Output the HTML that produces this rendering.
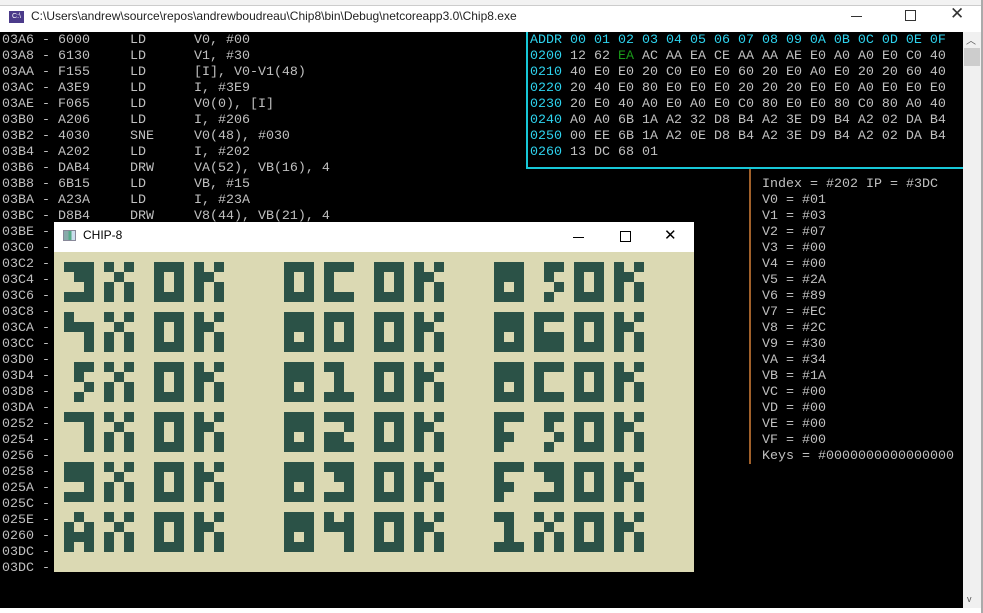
<!DOCTYPE html>
<html><head><meta charset="utf-8"><style>
*{margin:0;padding:0;box-sizing:border-box}
body{width:983px;height:613px;overflow:hidden;background:#fff;position:relative;font-family:"Liberation Sans",sans-serif}
.abs{position:absolute}
.mono{font-family:"Liberation Mono","DejaVu Sans Mono",monospace;font-size:13.33px;line-height:16px;white-space:pre;color:#c0c0c0}
.cy{color:#2ed3ee}
.gr{color:#1a9a1a}
</style></head><body>
<div class="abs" style="left:0;top:0;width:983px;height:6px;background:#f2f2f2"></div>
<div class="abs" style="left:0;top:5px;width:981px;height:27px;background:#fff;border-top:1px solid #ccc"></div>
<div class="abs" style="left:9px;top:11px;width:15px;height:12px;background:#4b3b8a;color:#fff;font-size:7px;line-height:12px;text-align:center">C:\</div>
<div class="abs" style="left:31px;top:9px;font-size:12px;color:#222;white-space:pre">C:\Users\andrew\source\repos\andrewboudreau\Chip8\bin\Debug\netcoreapp3.0\Chip8.exe</div>
<div class="abs" style="left:851px;top:16px;width:11px;height:1px;background:#333"></div>
<div class="abs" style="left:905px;top:10px;width:11px;height:11px;border:1px solid #333"></div>
<div class="abs" style="left:950px;top:4px;font-size:17px;color:#333">✕</div>
<div class="abs" style="left:0;top:32px;width:963px;height:576px;background:#000"></div>
<div class="abs" style="left:963px;top:32px;width:18px;height:576px;background:#f0f0f0"></div>
<div class="abs" style="left:964px;top:48px;width:16px;height:18px;background:#cdcdcd"></div>
<div class="abs" style="left:966px;top:32px;font-size:10px;color:#555">︿</div>
<div class="abs" style="left:967px;top:594px;font-size:9px;color:#555">v</div>
<div class="abs" style="left:981px;top:0;width:2px;height:613px;background:#aaa"></div>
<div class="abs" style="left:0;top:608px;width:981px;height:5px;background:#fff"></div>

<div class="abs mono" style="left:2px;top:33px">03A6 - 6000     LD      V0, #00
03A8 - 6130     LD      V1, #30
03AA - F155     LD      [I], V0-V1(48)
03AC - A3E9     LD      I, #3E9
03AE - F065     LD      V0(0), [I]
03B0 - A206     LD      I, #206
03B2 - 4030     SNE     V0(48), #030
03B4 - A202     LD      I, #202
03B6 - DAB4     DRW     VA(52), VB(16), 4
03B8 - 6B15     LD      VB, #15
03BA - A23A     LD      I, #23A
03BC - D8B4     DRW     V8(44), VB(21), 4
03BE -
03C0 -
03C2 -
03C4 -
03C6 -
03C8 -
03CA -
03CC -
03D0 -
03D4 -
03D8 -
03DA -
0252 -
0254 -
0256 -
0258 -
025A -
025C -
025E -
0260 -
03DC -
03DC -</div>

<div class="abs" style="left:526px;top:32px;width:437px;height:137px;border-left:2px solid #17c8d8;border-bottom:2px solid #17c8d8"></div>
<div class="abs mono" style="left:530px;top:33px"><span class="cy">ADDR 00 01 02 03 04 05 06 07 08 09 0A 0B 0C 0D 0E 0F</span>
<span class="cy">0200</span> 12 62 <span class="gr">EA</span> AC AA EA CE AA AA AE E0 A0 A0 E0 C0 40
<span class="cy">0210</span> 40 E0 E0 20 C0 E0 E0 60 20 E0 A0 E0 20 20 60 40
<span class="cy">0220</span> 20 40 E0 80 E0 E0 E0 20 20 20 E0 E0 A0 E0 E0 E0
<span class="cy">0230</span> 20 E0 40 A0 E0 A0 E0 C0 80 E0 E0 80 C0 80 A0 40
<span class="cy">0240</span> A0 A0 6B 1A A2 32 D8 B4 A2 3E D9 B4 A2 02 DA B4
<span class="cy">0250</span> 00 EE 6B 1A A2 0E D8 B4 A2 3E D9 B4 A2 02 DA B4
<span class="cy">0260</span> 13 DC 68 01</div>

<div class="abs" style="left:749px;top:169px;width:2px;height:295px;background:#a0602a"></div>
<div class="abs mono" style="left:762px;top:177px">Index = #202 IP = #3DC
V0 = #01
V1 = #03
V2 = #07
V3 = #00
V4 = #00
V5 = #2A
V6 = #89
V7 = #EC
V8 = #2C
V9 = #30
VA = #34
VB = #1A
VC = #00
VD = #00
VE = #00
VF = #00
Keys = #0000000000000000</div>

<div class="abs" style="left:54px;top:222px;width:640px;height:30px;background:#fff"></div>
<div class="abs" style="left:63px;top:230px;width:13px;height:11px;background:linear-gradient(90deg,#8aa 0 40%,#5a8 40% 70%,#cde 70%);border:1px solid #889"></div>
<div class="abs" style="left:83px;top:228px;font-size:12px;color:#000">CHIP-8</div>
<div class="abs" style="left:573px;top:237px;width:11px;height:1px;background:#000"></div>
<div class="abs" style="left:620px;top:231px;width:11px;height:11px;border:1px solid #000"></div>
<div class="abs" style="left:664px;top:226px;font-size:15px;color:#000">✕</div>
<svg class="abs" style="left:54px;top:252px" width="640" height="320" viewBox="0 0 64 32" shape-rendering="crispEdges">
<defs>
<g id="g3"><rect x="0" y="0" width="3" height="1"/><rect x="1" y="1" width="2" height="1"/><rect x="2" y="2" width="1" height="1"/><rect x="0" y="3" width="3" height="1"/></g>
<g id="gX"><rect x="0" y="0" width="1" height="1"/><rect x="2" y="0" width="1" height="1"/><rect x="1" y="1" width="1" height="1"/><rect x="0" y="2" width="1" height="2"/><rect x="2" y="2" width="1" height="2"/></g>
<g id="gO"><rect x="0" y="0" width="3" height="1"/><rect x="0" y="1" width="1" height="2"/><rect x="2" y="1" width="1" height="2"/><rect x="0" y="3" width="3" height="1"/></g>
<g id="gK"><rect x="0" y="0" width="1" height="4"/><rect x="2" y="0" width="1" height="1"/><rect x="1" y="1" width="1" height="1"/><rect x="2" y="2" width="1" height="2"/></g>
<g id="g4a"><rect x="0" y="0" width="1" height="2"/><rect x="0" y="1" width="3" height="1"/><rect x="2" y="1" width="1" height="3"/></g>
<g id="g4b"><rect x="0" y="0" width="1" height="2"/><rect x="2" y="0" width="1" height="4"/><rect x="0" y="1" width="3" height="1"/></g>
<g id="g5"><rect x="1" y="0" width="2" height="1"/><rect x="1" y="1" width="1" height="1"/><rect x="2" y="2" width="1" height="1"/><rect x="1" y="3" width="1" height="1"/></g>
<g id="g7"><rect x="0" y="0" width="3" height="1"/><rect x="2" y="0" width="1" height="4"/></g>
<g id="g9"><rect x="0" y="0" width="3" height="2"/><rect x="2" y="2" width="1" height="1"/><rect x="0" y="3" width="3" height="1"/></g>
<g id="gA"><rect x="1" y="0" width="1" height="1"/><rect x="0" y="1" width="1" height="3"/><rect x="2" y="1" width="1" height="3"/><rect x="1" y="2" width="1" height="1"/></g>
<g id="gC"><rect x="0" y="0" width="3" height="1"/><rect x="0" y="1" width="1" height="2"/><rect x="0" y="3" width="3" height="1"/></g>
<g id="g8"><rect x="0" y="0" width="3" height="2"/><rect x="0" y="2" width="1" height="1"/><rect x="2" y="2" width="1" height="1"/><rect x="0" y="3" width="3" height="1"/></g>
<g id="g1"><rect x="0" y="0" width="2" height="1"/><rect x="1" y="1" width="1" height="2"/><rect x="0" y="3" width="3" height="1"/></g>
<g id="g2"><rect x="0" y="0" width="3" height="1"/><rect x="2" y="1" width="1" height="1"/><rect x="0" y="2" width="2" height="1"/><rect x="0" y="3" width="3" height="1"/></g>
<g id="g6"><rect x="0" y="0" width="3" height="1"/><rect x="0" y="1" width="1" height="1"/><rect x="0" y="2" width="3" height="2"/></g>
<g id="gF"><rect x="0" y="0" width="3" height="1"/><rect x="0" y="1" width="1" height="3"/><rect x="1" y="2" width="1" height="1"/></g>
</defs>
<rect width="64" height="32" fill="#dbd9b3"/>
<g fill="#2b5247">
<use href="#g3" x="1" y="1"/><use href="#g4a" x="1" y="6"/><use href="#g5" x="1" y="11"/><use href="#g7" x="1" y="16"/><use href="#g9" x="1" y="21"/><use href="#gA" x="1" y="26"/>
<use href="#gX" x="5" y="1"/><use href="#gX" x="5" y="6"/><use href="#gX" x="5" y="11"/><use href="#gX" x="5" y="16"/><use href="#gX" x="5" y="21"/><use href="#gX" x="5" y="26"/>
<use href="#gO" x="10" y="1"/><use href="#gO" x="10" y="6"/><use href="#gO" x="10" y="11"/><use href="#gO" x="10" y="16"/><use href="#gO" x="10" y="21"/><use href="#gO" x="10" y="26"/>
<use href="#gK" x="14" y="1"/><use href="#gK" x="14" y="6"/><use href="#gK" x="14" y="11"/><use href="#gK" x="14" y="16"/><use href="#gK" x="14" y="21"/><use href="#gK" x="14" y="26"/>

<use href="#gO" x="23" y="1"/><use href="#g8" x="23" y="6"/><use href="#g8" x="23" y="11"/><use href="#g8" x="23" y="16"/><use href="#g8" x="23" y="21"/><use href="#g8" x="23" y="26"/>
<use href="#gC" x="27" y="1"/><use href="#gO" x="27" y="6"/><use href="#g1" x="27" y="11"/><use href="#g2" x="27" y="16"/><use href="#g3" x="27" y="21"/><use href="#g4b" x="27" y="26"/>
<use href="#gO" x="32" y="1"/><use href="#gO" x="32" y="6"/><use href="#gO" x="32" y="11"/><use href="#gO" x="32" y="16"/><use href="#gO" x="32" y="21"/><use href="#gO" x="32" y="26"/>
<use href="#gK" x="36" y="1"/><use href="#gK" x="36" y="6"/><use href="#gK" x="36" y="11"/><use href="#gK" x="36" y="16"/><use href="#gK" x="36" y="21"/><use href="#gK" x="36" y="26"/>

<use href="#g8" x="44" y="1"/><use href="#g8" x="44" y="6"/><use href="#g8" x="44" y="11"/><use href="#gF" x="44" y="16"/><use href="#gF" x="44" y="21"/><use href="#g1" x="44" y="26"/>
<use href="#g5" x="48" y="1"/><use href="#g6" x="48" y="6"/><use href="#gC" x="48" y="11"/><use href="#g5" x="48" y="16"/><use href="#g3" x="48" y="21"/><use href="#gX" x="48" y="26"/>
<use href="#gO" x="52" y="1"/><use href="#gO" x="52" y="6"/><use href="#gO" x="52" y="11"/><use href="#gO" x="52" y="16"/><use href="#gO" x="52" y="21"/><use href="#gO" x="52" y="26"/>
<use href="#gK" x="56" y="1"/><use href="#gK" x="56" y="6"/><use href="#gK" x="56" y="11"/><use href="#gK" x="56" y="16"/><use href="#gK" x="56" y="21"/><use href="#gK" x="56" y="26"/>
</g>
</svg>
</body></html>
